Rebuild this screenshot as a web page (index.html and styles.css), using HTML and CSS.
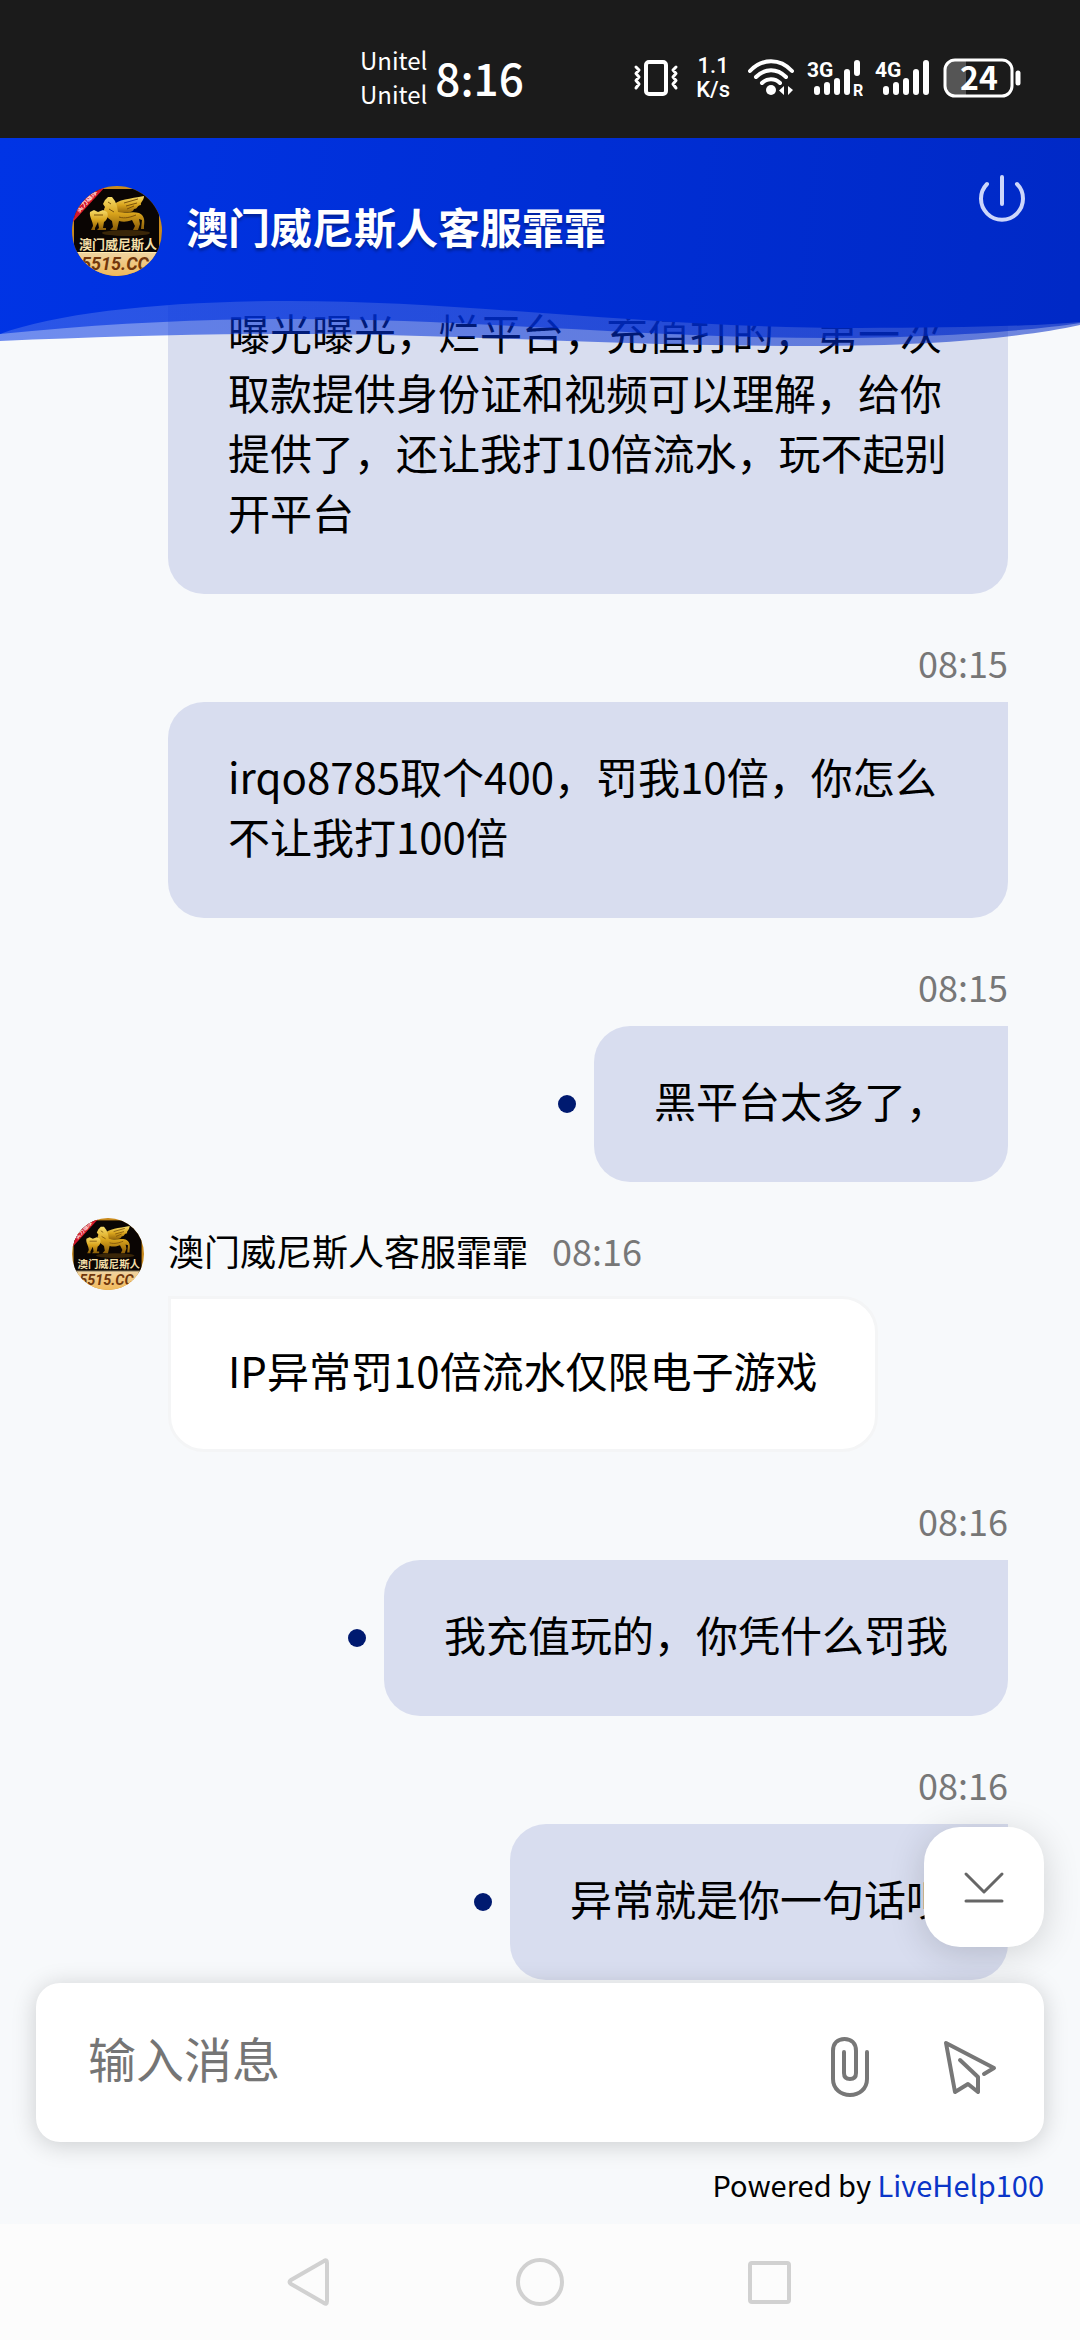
FILE: index.html
```html
<!DOCTYPE html>
<html lang="zh-CN">
<head>
	<meta charset="utf-8">
	<meta name="viewport" content="width=device-width, initial-scale=1">
	<title>澳门威尼斯人客服霏霏</title>
	<link rel="stylesheet" href="styles.css">
</head>
<body>

	<!-- 头像 -->
	<svg class="defs" width="0" height="0" aria-hidden="true">
		<defs>
			<linearGradient id="gold" x1="0" y1="0" x2="0" y2="1">
				<stop offset="0" stop-color="#f6dc6a"/>
				<stop offset="0.5" stop-color="#d9a41c"/>
				<stop offset="1" stop-color="#8a5c08"/>
			</linearGradient>
			<linearGradient id="plate" x1="0" y1="0" x2="0" y2="1">
				<stop offset="0" stop-color="#f0d3a0"/>
				<stop offset="1" stop-color="#f0b95a"/>
			</linearGradient>
		</defs>
		<symbol id="avatar" viewBox="0 0 90 90">
			<rect width="90" height="90" fill="#c98a1c"/>
			<rect x="2" y="3" width="85" height="66" fill="#0a0503"/>
			<path d="M0 22 20 0H34L0 37Z" fill="#d3172c"/>
			<text class="av-ribbon" transform="translate(7 27) rotate(-48)">实力雄厚</text>
			<ellipse cx="54" cy="47" rx="24" ry="3" fill="#3a2608"/>
			<!-- 狮子 -->
			<g fill="url(#gold)">
				<path d="M40 20C46 13 58 13 72 10 72 15 68 16 69 19 65 19 66 23 62 23 61 27 55 26 50 27L41 28Z"/>
				<path d="M33 14 36 11 40 11 43 15 45 20 46 26C54 28 60 25 67 27 72 29 73 34 72 40L72 43 69 43 70 34 67 33 68 38 66 44 61 44 63 40 60 34C55 36 51 36 47 35L45 44 38 44 41 41 40 35 36 32C32 28 31 24 33 21L31 18Z"/>
				<path d="M18 26 22 24 26 26 31 24 35 26C37 30 35 34 32 36L31 42H34V44H25L27 42 26 36 23 42V44H19L21 40C21 35 17 31 18 26Z"/>
			</g>
			<path d="M52 17 66 13M54 20 65 17M55 23 62 20M36 16 39 18M37 23 42 26M22 29 31 29M47 31C53 33 59 31 64 29" fill="none" stroke="#7b520b" stroke-width="1"/>
			<text class="av-name" x="7" y="63">澳门威尼斯人</text>
			<rect y="67" width="90" height="23" fill="url(#plate)"/>
			<path d="M0 66.500H90" stroke="#ffe9ae" stroke-width="1"/>
			<text class="av-site" x="9" y="84">5515.CC</text>
		</symbol>
	</svg>

	<div class="status">
		<div class="status-left">
			<div class="carrier"><span>Unitel</span><span>Unitel</span></div>
			<time class="clock">8:16</time>
		</div>
		<div class="status-right">
			<svg width="46" height="38" viewBox="0 0 46 38" fill="none" stroke="#fff" stroke-linecap="round" stroke-linejoin="round">
				<rect x="13" y="3" width="20" height="32" rx="3" stroke-width="4"/>
				<path d="M3 8 6 11 3 14.500 6 18 3 21.500 6 25 3 29M43 8 40 11 43 14.500 40 18 43 21.500 40 25 43 29" stroke-width="3"/>
			</svg>
			<div class="speed"><span>1.1</span><span>K/s</span></div>
			<svg width="48" height="38" viewBox="0 0 48 38" fill="none" stroke="#fff" stroke-width="4" stroke-linecap="round">
				<path d="M3 12C15-1 33-1 45 12M9 18C18 9 30 9 39 18M15 24C20 19 28 19 33 24"/>
				<circle cx="24" cy="31" r="5" fill="#fff" stroke="none"/>
				<path d="M32 31.500 37 27V36ZM46 31 41 27V36Z" fill="#fff" stroke="none"/>
			</svg>
			<svg width="56" height="38" viewBox="0 0 56 38">
				<text class="net" x="0" y="18">3G</text>
				<path d="M10 30V33M20 26V33M30 22V33M40 13V33M50 4V14" stroke="#fff" stroke-width="6" stroke-linecap="round"/>
				<text class="roam" x="46" y="37">R</text>
			</svg>
			<svg width="56" height="38" viewBox="0 0 56 38">
				<text class="net" x="0" y="18">4G</text>
				<path d="M11 30V33M21 26V33M31 22V33M41 13V33M51 4V33" stroke="#fff" stroke-width="6" stroke-linecap="round"/>
			</svg>
			<svg width="80" height="40" viewBox="0 0 80 40">
				<path d="M12 2H23V38H12Q3 38 3 29V11Q3 2 12 2Z" fill="#555"/>
				<rect x="2" y="2" width="67" height="36" rx="10" fill="none" stroke="#fff" stroke-width="3"/>
				<path d="M75 15V25" stroke="#fff" stroke-width="5" stroke-linecap="round"/>
				<text class="battery" x="36" y="32" text-anchor="middle">24</text>
			</svg>
		</div>
	</div>

	<div class="chat">
		<header class="head">
			<svg class="head-bg" viewBox="0 0 1080 210" preserveAspectRatio="none" aria-hidden="true">
				<defs>
					<linearGradient id="blue" gradientUnits="userSpaceOnUse" x1="0" y1="0" x2="1080" y2="120">
						<stop offset="0" stop-color="#0034e5"/>
						<stop offset="1" stop-color="#0029c6"/>
					</linearGradient>
				</defs>
				<g fill="url(#blue)">
					<path opacity="0.55" d="M0 0V203C100 199 190 196 290 196 470 196 600 208 810 208 930 208 1020 200 1080 187V0Z"/>
					<path opacity="0.62" d="M0 0V196C100 186 190 181 300 181 470 181 650 200 830 200 930 200 1030 193 1080 185V0Z"/>
					<path d="M0 0V196C60 174 170 163 290 163 470 163 650 190 860 190 950 190 1040 188 1080 184V0Z"/>
				</g>
			</svg>
			<svg class="avatar avatar-lg"><use href="#avatar"/></svg>
			<h1 class="head-name">澳门威尼斯人客服霏霏</h1>
			<button class="power" type="button" aria-label="结束对话">
				<svg width="48" height="48" viewBox="0 0 48 48" fill="none" stroke="#ccd6fb" stroke-width="4" stroke-linecap="round">
					<path d="M24 3V30M9 10A21 21 0 1 0 39 10"/>
				</svg>
			</button>
		</header>

		<main class="messages">
			<div class="msg mine">
				<div class="row"><p class="bubble">曝光曝光，烂平台，充值打的，第一次取款提供身份证和视频可以理解，给你提供了，还让我打10倍流水，玩不起别开平台</p></div>
			</div>
			<div class="msg mine">
				<time>08:15</time>
				<div class="row"><p class="bubble">irqo8785取个400，罚我10倍，你怎么不让我打100倍</p></div>
			</div>
			<div class="msg mine">
				<time>08:15</time>
				<div class="row"><i class="dot"></i><p class="bubble">黑平台太多了，</p></div>
			</div>
			<div class="msg agent">
				<div class="agent-info">
					<svg class="avatar"><use href="#avatar"/></svg>
					<span class="agent-name">澳门威尼斯人客服霏霏</span>
					<time>08:16</time>
				</div>
				<p class="bubble">IP异常罚10倍流水仅限电子游戏</p>
			</div>
			<div class="msg mine">
				<time>08:16</time>
				<div class="row"><i class="dot"></i><p class="bubble">我充值玩的，你凭什么罚我</p></div>
			</div>
			<div class="msg mine">
				<time>08:16</time>
				<div class="row"><i class="dot"></i><p class="bubble">异常就是你一句话呗</p></div>
			</div>
		</main>

		<div class="bottom">
			<button class="to-end" type="button" aria-label="回到底部">
				<svg width="48" height="48" viewBox="0 0 48 48" fill="none" stroke="#666" stroke-width="3" stroke-linecap="round" stroke-linejoin="round">
					<path d="M6 11 24 29 42 11M6 38H42"/>
				</svg>
			</button>
			<form class="composer">
				<input class="field" type="text" placeholder="输入消息" aria-label="输入消息">
				<button type="button" aria-label="附件">
					<svg width="60" height="64" viewBox="0 0 60 64" fill="none" stroke="#777" stroke-width="4" stroke-linecap="round">
						<path d="M47 17V44C47 54 39 60 30 60S13 54 13 44V16C13 8 18 4 24.500 4S36 8 36 16V38C36 42 34 44 30 44S24 42 24 38V17"/>
					</svg>
				</button>
				<button type="button" aria-label="发送">
					<svg width="60" height="64" viewBox="0 0 60 64" fill="none" stroke="#777" stroke-width="4" stroke-linecap="round" stroke-linejoin="round">
						<path d="M44 39 54 33 6 8 15 57 28 49 38 57V42L20 25"/>
					</svg>
				</button>
			</form>
			<p class="powered">Powered by <a href="#">LiveHelp100</a></p>
		</div>
	</div>

	<nav class="sysnav">
		<button type="button" aria-label="返回">
			<svg width="50" height="50" viewBox="0 0 50 50"><path d="M38 4Q41 2 41 6V44Q41 48 38 46L5 27Q2 25 5 23Z"/></svg>
		</button>
		<button type="button" aria-label="主页">
			<svg width="50" height="50" viewBox="0 0 50 50"><circle cx="25" cy="25" r="22"/></svg>
		</button>
		<button type="button" aria-label="最近任务">
			<svg width="50" height="50" viewBox="0 0 50 50"><rect x="6" y="6" width="39" height="39" rx="2"/></svg>
		</button>
	</nav>

</body>
</html>
```
FILE: styles.css
```css
* { box-sizing: border-box; }
body { margin: 0;height: 100vh;display: flex;flex-direction: column;overflow: hidden;background: #f7f9fb;color: #000;font-family: "Noto Sans CJK SC", "Noto Sans", sans-serif; }
p, h1 { margin: 0; }
button { border: 0;padding: 0;background: none;cursor: pointer; }
svg { display: block;flex: none; }
.defs { position: absolute; }

/* 状态栏 */
.status { height: 138px;flex: none;padding: 18px 57px 0 360px;display: flex;justify-content: space-between;align-items: center;background: #1b1b1b;color: #fff; }
.status-left, .status-right { display: flex;align-items: center; }
.status-left { gap: 8px;padding-bottom: 2px; }
.status-right { gap: 12px; }
.carrier, .speed { display: flex;flex-direction: column;text-align: center; }
.carrier { font: 24px/34px "Noto Sans CJK SC", sans-serif; }
.speed { margin: 0 5px;font: 500 22px/24px "Roboto", sans-serif; }
.clock { font-size: 44px;line-height: 60px;font-weight: 500; }
.net { font: bold 21px "Roboto", sans-serif;fill: #fff; }
.roam { font: bold 16px "Roboto", sans-serif;fill: #fff; }
.battery { font: bold 32px "Noto Sans CJK SC", sans-serif;fill: #fff; }

/* 头部 */
.chat { flex: 1;min-height: 0;position: relative;display: flex;flex-direction: column; }
.head { position: absolute;top: 0;left: 0;right: 0;z-index: 2;height: 210px;padding: 0 54px 24px 72px;display: flex;align-items: center;gap: 24px; }
.head-bg { position: absolute;top: 0;left: 0;width: 100%;height: 100%;z-index: -1; }
.head-name { flex: 1;padding-bottom: 10px;color: #fff;font-size: 42px;line-height: 60px;font-weight: bold;text-shadow: 0 3px 3px rgba(0,0,0,.3); }
.power { align-self: flex-start;margin-top: 36px; }
.avatar { width: 72px;height: 72px;border-radius: 50%; }
.avatar-lg { width: 90px;height: 90px; }
.av-ribbon { font: bold 7px "Noto Sans CJK SC", sans-serif;fill: #ffd9d9; }
.av-name { font: bold 13px "Noto Sans CJK SC", sans-serif;fill: #f3dfa8; }
.av-site { font: italic bold 18px "Roboto", sans-serif;fill: #70360c; }

/* 消息 */
.messages { flex: 1;min-height: 0;overflow: hidden;padding: 0 72px 3px;display: flex;flex-direction: column;justify-content: flex-end;gap: 36px; }
.msg { display: flex;flex-direction: column;flex: none; }
.msg time { color: #777;font-size: 36px;line-height: 48px; }
.mine { align-items: flex-end;padding-left: 96px; }
.mine time { padding: 8px 0 16px; }
.row { display: flex;align-items: center;gap: 18px; }
.dot { width: 18px;height: 18px;flex: none;border-radius: 50%;background: #001a70; }
.bubble { padding: 44px 60px 52px;border-radius: 36px 0 36px 36px;background: #d8ddef;font-size: 42px;line-height: 60px; }
.agent { align-items: flex-start;gap: 6px; }
.agent .bubble { margin-left: 96px;padding: 41px 57px 49px;border: 3px solid #f4f5f6;border-radius: 0 36px 36px 36px;background: #fff; }
.agent-info { display: flex;align-items: center;gap: 24px; }
.agent-name { font-size: 36px;line-height: 48px; }
.agent-name, .agent-info time { padding-bottom: 8px; }

/* 输入区 */
.bottom { flex: none;position: relative;padding: 0 36px; }
.to-end { position: absolute;right: 36px;bottom: 100%;width: 120px;height: 120px;margin-bottom: 36px;display: flex;align-items: center;justify-content: center;border-radius: 36px;background: #fff;box-shadow: 0 6px 36px rgba(0,0,0,.16); }
.composer { position: relative;height: 159px;padding: 0 44px 0 52px;display: flex;align-items: center;gap: 60px;border-radius: 24px;background: #fff;box-shadow: 0 3px 24px rgba(0,0,0,.18); }
.composer button { padding-top: 8px; }
.field { flex: 1;min-width: 0;border: 0;padding: 0 0 12px;outline: none;background: none;font-family: inherit;font-size: 48px;line-height: 72px; }
.field::placeholder { color: #757575;opacity: 1; }
.powered { height: 82px;font-size: 29px;line-height: 84px;text-align: right; }
.powered a { color: #0a35c8;text-decoration: none; }

/* 系统导航 */
.sysnav { height: 116px;flex: none;display: flex;justify-content: center;align-items: center;gap: 179px;background: #fcfcfc; }
.sysnav svg { fill: none;stroke: #d1d1d1;stroke-width: 4; }
```
